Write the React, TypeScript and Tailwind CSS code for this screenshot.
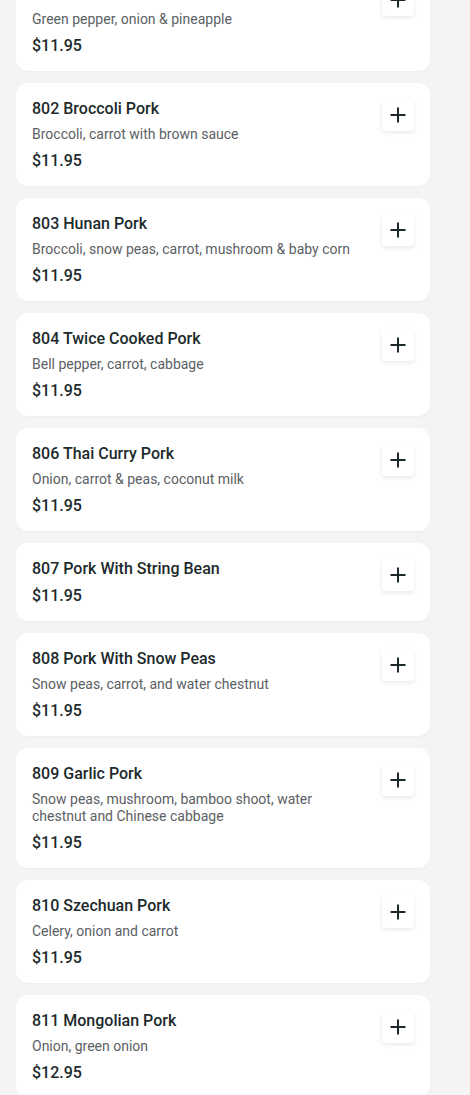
import React from 'react';

interface MenuItem {
  name: string;
  description?: string;
  price: string;
}

const items: MenuItem[] = [
  { name: '801 Sweet and Sour Pork', description: 'Green pepper, onion & pineapple', price: '$11.95' },
  { name: '802 Broccoli Pork', description: 'Broccoli, carrot with brown sauce', price: '$11.95' },
  { name: '803 Hunan Pork', description: 'Broccoli, snow peas, carrot, mushroom & baby corn', price: '$11.95' },
  { name: '804 Twice Cooked Pork', description: 'Bell pepper, carrot, cabbage', price: '$11.95' },
  { name: '806 Thai Curry Pork', description: 'Onion, carrot & peas, coconut milk', price: '$11.95' },
  { name: '807 Pork With String Bean', price: '$11.95' },
  { name: '808 Pork With Snow Peas', description: 'Snow peas, carrot, and water chestnut', price: '$11.95' },
  { name: '809 Garlic Pork', description: 'Snow peas, mushroom, bamboo shoot, water chestnut and Chinese cabbage', price: '$11.95' },
  { name: '810 Szechuan Pork', description: 'Celery, onion and carrot', price: '$11.95' },
  { name: '811 Mongolian Pork', description: 'Onion, green onion', price: '$12.95' },
];

const PlusIcon = () => (
  <svg width="18" height="18" viewBox="0 0 18 18" fill="none" stroke="#1c2a2c" strokeWidth="2">
    <path d="M9 1.5v15M1.5 9h15" />
  </svg>
);

const ItemCard: React.FC<{ item: MenuItem }> = ({ item }) => (
  <div className="bg-white rounded-xl p-4 flex items-start gap-4 shadow-[0_1px_2px_rgba(0,0,0,0.03)]">
    <div className="flex-1 flex flex-col gap-2">
      <div className="text-base font-medium leading-[19px] text-[#1c2a2c]">{item.name}</div>
      {item.description && (
        <div className="text-sm leading-[17px] text-[#5b6064]">{item.description}</div>
      )}
      <div className="text-base font-medium leading-[19px] text-[#1c2a2c]">{item.price}</div>
    </div>
    <button className="w-8 h-8 shrink-0 flex items-center justify-center bg-white rounded shadow-[0_2px_5px_rgba(0,0,0,0.09)]">
      <PlusIcon />
    </button>
  </div>
);

export default function App() {
  return (
    <div className="h-[1095px] bg-[#f4f4f4] overflow-hidden font-['Roboto',_'Liberation_Sans',_sans-serif]">
      <div className="ml-4 w-[414px] -mt-[32px] flex flex-col gap-3 pb-4">
        {items.map((item) => (
          <ItemCard key={item.name} item={item} />
        ))}
      </div>
    </div>
  );
}
